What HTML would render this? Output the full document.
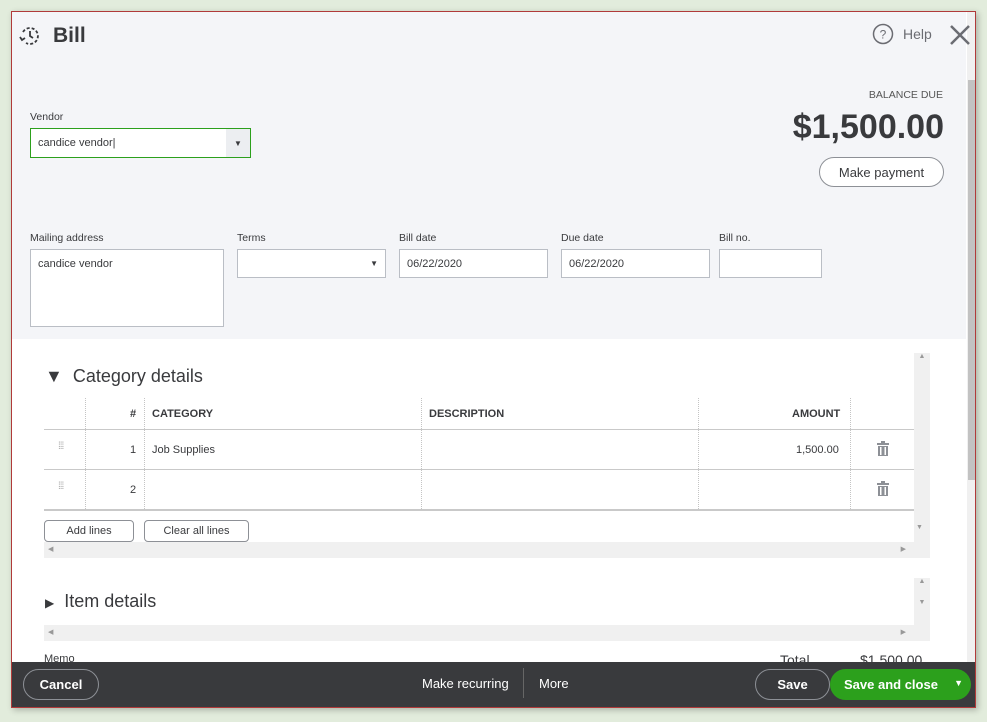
<!DOCTYPE html>
<html><head><style>
*{box-sizing:border-box;margin:0;padding:0}
body{width:987px;height:722px;background:#e2ecdc;font-family:"Liberation Sans",sans-serif;color:#393a3d;position:relative;overflow:hidden}
.win{position:absolute;left:11px;top:11px;width:965px;height:697px;border:1px solid #b03a3a;background:#fff;overflow:hidden;box-shadow:2px 2px 6px rgba(0,0,0,.25)}
.a{position:absolute}
.top{left:0;top:0;width:954px;height:327px;background:#f4f5f8}
.lbl{font-size:10.5px;color:#393a3d}
.inp{border:1px solid #babec5;background:#fff;font-size:11px;padding:0 7px;display:flex;align-items:center}
.btn{border:1px solid #8d9096;border-radius:4px;background:#fff;font-size:11px;display:flex;align-items:center;justify-content:center}
.th{font-size:11px;font-weight:bold;color:#393a3d}
.td{font-size:11px}
.vl{border-left:1px dotted #c4c4c4}
</style></head><body>
<div class="win">
 <div class="a top"></div>
 <div class="a" style="left:955px;top:0;width:9px;height:650px;background:#f0f0f0"></div>
 <div class="a" style="left:956px;top:68px;width:7px;height:400px;background:#c2c2c2"></div>
 <svg class="a" style="left:6px;top:12px" width="24" height="24" viewBox="0 0 24 24" fill="none" stroke="#393a3d" stroke-width="1.8"><path d="M5 8A8 8 0 1 1 8 19" stroke-dasharray="3 2"/><path d="M12 7v5l3 2"/><path d="M2 13l2 3 3-2"/></svg>
 <div class="a" style="left:41px;top:12px;font-size:21px;font-weight:bold">Bill</div>
 <svg class="a" style="left:860px;top:11px" width="22" height="22" viewBox="0 0 22 22" fill="none" stroke="#6b6c72" stroke-width="1.5"><circle cx="11" cy="11" r="9.5"/><text x="11" y="15.5" font-size="12" text-anchor="middle" fill="#6b6c72" stroke="none" font-family="Liberation Sans">?</text></svg>
 <div class="a" style="left:891px;top:14px;font-size:14px;color:#6b6c72">Help</div>
 <svg class="a" style="left:937px;top:12px" width="22" height="22" viewBox="0 0 22 22" stroke="#6b6c72" stroke-width="2.5"><path d="M2 2L20 20M20 2L2 20"/></svg>
 <div class="a lbl" style="left:18px;top:99px">Vendor</div>
 <div class="a inp" style="left:18px;top:116px;width:221px;height:30px;border-color:#2ca01c">candice vendor|</div>
 <div class="a" style="left:214px;top:117px;width:24px;height:28px;background:#eceef1;font-size:8px;display:flex;align-items:center;justify-content:center">▼</div>
 <div class="a" style="right:32px;top:77px;font-size:10.5px;color:#555">BALANCE DUE</div>
 <div class="a" style="right:31px;top:96px;font-size:34px;font-weight:bold;color:#393a3d">$1,500.00</div>
 <div class="a btn" style="left:807px;top:145px;width:125px;height:30px;border-radius:16px;font-size:13px">Make payment</div>
 <div class="a lbl" style="left:18px;top:220px">Mailing address</div>
 <div class="a inp" style="left:18px;top:237px;width:194px;height:78px;align-items:flex-start;padding-top:8px">candice vendor</div>
 <div class="a lbl" style="left:225px;top:220px">Terms</div>
 <div class="a inp" style="left:225px;top:237px;width:149px;height:29px;justify-content:flex-end;font-size:8px">▼</div>
 <div class="a lbl" style="left:387px;top:220px">Bill date</div>
 <div class="a inp" style="left:387px;top:237px;width:149px;height:29px">06/22/2020</div>
 <div class="a lbl" style="left:549px;top:220px">Due date</div>
 <div class="a inp" style="left:549px;top:237px;width:149px;height:29px">06/22/2020</div>
 <div class="a lbl" style="left:707px;top:220px">Bill no.</div>
 <div class="a inp" style="left:707px;top:237px;width:103px;height:29px"></div>

 <div class="a" style="left:902px;top:341px;width:16px;height:205px;background:#f0f0f0;font-size:7px;color:#999;text-align:center">▲</div>
 <div class="a" style="left:904px;top:512px;font-size:7px;color:#999">▼</div>
 <div class="a" style="left:33px;top:354px;font-size:18px;color:#393a3d">▼&nbsp; Category details</div>
 <div class="a" style="left:32px;top:386px;width:870px;height:113px">
  <div class="a vl" style="left:41px;top:0;height:111px"></div>
  <div class="a vl" style="left:100px;top:0;height:111px"></div>
  <div class="a vl" style="left:377px;top:0;height:111px"></div>
  <div class="a vl" style="left:654px;top:0;height:111px"></div>
  <div class="a vl" style="left:806px;top:0;height:111px"></div>
  <div class="a" style="left:0;top:31px;width:870px;border-top:1px solid #c9c9c9"></div>
  <div class="a" style="left:0;top:71px;width:870px;border-top:1px solid #c9c9c9"></div>
  <div class="a" style="left:0;top:111px;width:870px;border-top:2px solid #c9c9c9"></div>
  <div class="a th" style="left:86px;top:10px">#</div>
  <div class="a th" style="left:108px;top:10px">CATEGORY</div>
  <div class="a th" style="left:385px;top:10px">DESCRIPTION</div>
  <div class="a th" style="left:748px;top:10px">AMOUNT</div>
  <div class="a" style="left:14px;top:43px;font-size:10px;color:#aaa;letter-spacing:-1px">⁞⁞⁞</div>
  <div class="a" style="left:14px;top:83px;font-size:10px;color:#aaa;letter-spacing:-1px">⁞⁞⁞</div>
  <div class="a td" style="left:86px;top:57px"></div>
  <div class="a td" style="left:86px;top:57px;margin-top:-11px">1</div>
  <div class="a td" style="left:108px;top:46px">Job Supplies</div>
  <div class="a td" style="left:752px;top:46px">1,500.00</div>
  <div class="a td" style="left:86px;top:86px">2</div>
  <svg class="a" style="left:833px;top:43px" width="12" height="15" viewBox="0 0 12 15" fill="#8d9096"><rect x="0" y="2" width="12" height="2"/><rect x="4" y="0" width="4" height="2"/><path d="M1 5h10v10H1zM3 6v8h1.5V6zM7.5 6v8H9V6z" fill-rule="evenodd"/></svg>
  <svg class="a" style="left:833px;top:83px" width="12" height="15" viewBox="0 0 12 15" fill="#8d9096"><rect x="0" y="2" width="12" height="2"/><rect x="4" y="0" width="4" height="2"/><path d="M1 5h10v10H1zM3 6v8h1.5V6zM7.5 6v8H9V6z" fill-rule="evenodd"/></svg>
 </div>
 <div class="a btn" style="left:32px;top:508px;width:90px;height:22px">Add lines</div>
 <div class="a btn" style="left:132px;top:508px;width:105px;height:22px">Clear all lines</div>
 <div class="a" style="left:32px;top:530px;width:886px;height:16px;background:#f0f0f0;font-size:7px;color:#999;padding:3px 4px">◀<span style="float:right;margin-right:20px">▶</span></div>
 <div class="a" style="left:902px;top:566px;width:16px;height:48px;background:#f0f0f0;font-size:7px;color:#999;text-align:center">▲<br><br><br>▼</div>
 <div class="a" style="left:33px;top:579px;font-size:18px;color:#393a3d"><span style="font-size:12px">▶</span>&nbsp; Item details</div>
 <div class="a" style="left:32px;top:613px;width:886px;height:16px;background:#f0f0f0;font-size:7px;color:#999;padding:3px 4px">◀<span style="float:right;margin-right:20px">▶</span></div>
 <div class="a" style="left:32px;top:641px;font-size:11px">Memo</div>
 <div class="a" style="left:768px;top:640px;font-size:14px">Total</div>
 <div class="a" style="left:848px;top:640px;font-size:14px">$1,500.00</div>
 <div class="a" style="left:0;top:650px;width:965px;height:47px;background:#393a3d"></div>
 <div class="a btn" style="left:11px;top:657px;width:76px;height:31px;border-radius:16px;background:transparent;color:#fff;border-color:#8d9096;font-size:13px;font-weight:bold">Cancel</div>
 <div class="a" style="left:410px;top:664px;font-size:13px;color:#fff">Make recurring</div>
 <div class="a" style="left:511px;top:656px;height:30px;border-left:1px solid #666"></div>
 <div class="a" style="left:527px;top:664px;font-size:13px;color:#fff">More</div>
 <div class="a btn" style="left:743px;top:657px;width:75px;height:31px;border-radius:16px;background:transparent;color:#fff;font-size:13px;font-weight:bold">Save</div>
 <div class="a" style="left:818px;top:657px;width:141px;height:31px;border-radius:16px;background:#2ca01c;color:#fff;font-size:13px;font-weight:bold;padding:8px 0 0 14px">Save and close<span style="position:absolute;right:8px;top:9px;font-size:9px">▼</span></div>
</div>
</body></html>
